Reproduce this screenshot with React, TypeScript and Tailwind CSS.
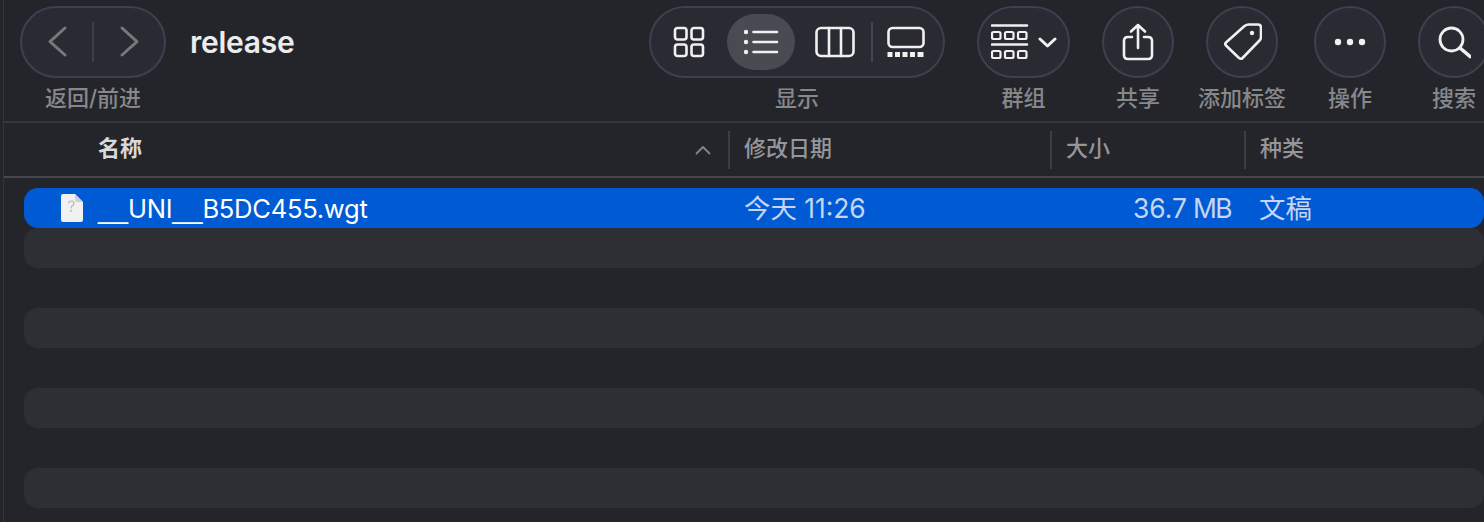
import React from "react";

const FONT = 'font-["Inter","Noto_Sans_CJK_SC",sans-serif]';

function ToolItem({ w, ml, label, children, className = "" }: { w: string; ml: string; label: string; children: React.ReactNode; className?: string }) {
  return (
    <div className={`flex flex-col items-center shrink-0 ${w} ${ml}`}>
      <div className={`h-[72px] w-full box-border rounded-[36px] border-2 border-[#3d404f] bg-[#292a32] flex items-center ${className}`}>
        {children}
      </div>
      <div className="mt-[5px] h-[30px] leading-[30px] whitespace-nowrap text-[22px] font-medium text-[#87888b]">{label}</div>
    </div>
  );
}

const stroke = { fill: "none", stroke: "#f0f0f1", strokeWidth: 2.6, strokeLinecap: "round", strokeLinejoin: "round" } as const;

export default function App() {
  return (
    <div className={`relative w-[1484px] h-[522px] overflow-hidden bg-[#24252a] ${FONT}`}>
      <div className="h-full ml-[3px] border-l border-[#34363f] flex flex-col">
        {/* toolbar */}
        <div className="h-[111px] pt-[6px] flex shrink-0 pl-[16px] box-content pb-[4px] border-b-2 border-[#36373b]">
          <ToolItem w="w-[146px]" ml="ml-0" label="返回/前进">
            <svg width="142" height="68" viewBox="22 8 142 68" className="shrink-0">
              <path d="M65 28 L50 41.7 L65 55" fill="none" stroke="#77787c" strokeWidth="3" strokeLinecap="round" strokeLinejoin="round" />
              <path d="M122 28 L137 41.7 L122 55" fill="none" stroke="#77787c" strokeWidth="3" strokeLinecap="round" strokeLinejoin="round" />
              <path d="M93 22 V62" stroke="#45464c" strokeWidth="1.5" />
            </svg>
          </ToolItem>
          <div className="ml-[24px] w-[459px] shrink-0 h-[72px] flex items-center text-[30px] font-semibold tracking-[-0.25px] text-[#ececed]">release</div>

          <div className="flex flex-col items-center shrink-0 w-[296px]">
            <div className="h-[72px] w-full box-border rounded-[36px] border-2 border-[#3d404f] bg-[#292a32] flex items-center">
              <div className="w-[76px] flex justify-center">
                <svg width="32" height="32" viewBox="0 0 32 32" {...stroke}>
                  <rect x="2" y="2" width="11.5" height="11.5" rx="2.5" />
                  <rect x="18.5" y="2" width="11.5" height="11.5" rx="2.5" />
                  <rect x="2" y="18.5" width="11.5" height="11.5" rx="2.5" />
                  <rect x="18.5" y="18.5" width="11.5" height="11.5" rx="2.5" />
                </svg>
              </div>
              <div className="w-[68px] h-[56px] rounded-[28px] bg-[#4a4b52] flex items-center justify-center">
                <svg width="36" height="28" viewBox="0 0 36 28">
                  <circle cx="3" cy="4" r="2.2" fill="#f0f0f1" />
                  <circle cx="3" cy="14" r="2.2" fill="#f0f0f1" />
                  <circle cx="3" cy="24" r="2.2" fill="#f0f0f1" />
                  <path d="M10.5 4 H34 M10.5 14 H34 M10.5 24 H34" {...stroke} />
                </svg>
              </div>
              <div className="w-[76px] flex justify-center pl-[4px]">
                <svg width="40" height="32" viewBox="0 0 40 32" {...stroke}>
                  <rect x="1.5" y="2" width="37" height="28" rx="4.5" />
                  <path d="M14 2 V30 M26 2 V30" />
                </svg>
              </div>
              <div className="w-[2px] h-[40px] bg-[#45464c]" />
              <div className="w-[69px] flex justify-center pr-[4px]">
                <svg width="38" height="32" viewBox="0 0 38 32">
                  <rect x="1.5" y="2" width="35" height="19" rx="4" {...stroke} />
                  <g fill="#f0f0f1">
                    <rect x="0.5" y="26" width="5" height="5" />
                    <rect x="8" y="26" width="5" height="5" />
                    <rect x="15.5" y="26" width="5" height="5" />
                    <rect x="23" y="26" width="5" height="5" />
                    <rect x="30.5" y="26" width="6" height="5" />
                  </g>
                </svg>
              </div>
            </div>
            <div className="mt-[5px] h-[30px] leading-[30px] text-[22px] font-medium text-[#87888b]">显示</div>
          </div>

          <ToolItem w="w-[93px]" ml="ml-[32px]" label="群组" className="pl-[12px]">
            <svg width="66" height="36" viewBox="0 0 66 36" className="shrink-0">
              <path d="M1 1.5 H36 M1 20.5 H36" {...stroke} />
              <g {...stroke} strokeWidth={2.2}>
                <rect x="1" y="8" width="8.5" height="7" rx="1.5" />
                <rect x="14" y="8" width="8.5" height="7" rx="1.5" />
                <rect x="27" y="8" width="8.5" height="7" rx="1.5" />
                <rect x="1" y="27" width="8.5" height="7" rx="1.5" />
                <rect x="14" y="27" width="8.5" height="7" rx="1.5" />
                <rect x="27" y="27" width="8.5" height="7" rx="1.5" />
              </g>
              <path d="M49 15 L56.5 22 L64 15" fill="none" stroke="#f0f0f1" strokeWidth="3" strokeLinecap="round" strokeLinejoin="round" />
            </svg>
          </ToolItem>

          <ToolItem w="w-[72px]" ml="ml-[32px]" label="共享" className="justify-center">
            <svg width="32" height="38" viewBox="0 0 32 38" {...stroke}>
              <path d="M10 14 H6 Q2 14 2 18 V32 Q2 36 6 36 H26 Q30 36 30 32 V18 Q30 14 26 14 H22" />
              <path d="M16 25 V2 M9 8.5 L16 2 L23 8.5" />
            </svg>
          </ToolItem>

          <ToolItem w="w-[72px]" ml="ml-[32px]" label="添加标签" className="justify-center">
            <svg width="40" height="40" viewBox="-1 0 40 40" {...stroke}>
              <path d="M26 2.5 H35 Q38 2.5 38 5.5 V15 Q38 17 36.5 18.5 L19.5 36 Q18 37.5 16 36 L3 23.5 Q1.5 22 3 20.5 L21.5 4 Q23.5 2.5 26 2.5 Z" />
              <circle cx="29" cy="11" r="2.2" fill="#f0f0f1" stroke="none" />
            </svg>
          </ToolItem>

          <ToolItem w="w-[72px]" ml="ml-[36px]" label="操作" className="justify-center">
            <svg width="32" height="8" viewBox="0 0 32 8">
              <circle cx="4" cy="4" r="3.2" fill="#f0f0f1" />
              <circle cx="16" cy="4" r="3.2" fill="#f0f0f1" />
              <circle cx="28" cy="4" r="3.2" fill="#f0f0f1" />
            </svg>
          </ToolItem>

          <ToolItem w="w-[72px]" ml="ml-[32px]" label="搜索" className="justify-center">
            <svg width="34" height="34" viewBox="0 0 34 34" fill="none" stroke="#f0f0f1" strokeLinecap="round">
              <circle cx="14.5" cy="14.5" r="11.5" strokeWidth="2.8" />
              <path d="M23 23 L33 31.5" strokeWidth="3.6" />
            </svg>
          </ToolItem>
        </div>

        {/* column header */}
        <div className="h-[55px] shrink-0 flex items-center border-b-2 border-[#47484c] text-[22px] font-medium text-[#95969a]">
          <div className="w-[724px] shrink-0 h-full flex items-center pl-[94px] pr-[17px] justify-between">
            <span className="font-bold text-[#d9d9da] pb-[3px]">名称</span>
            <svg width="16" height="10" viewBox="0 0 16 10" fill="none" stroke="#85868a" strokeWidth="1.8" strokeLinecap="round" strokeLinejoin="round">
              <path d="M1.5 8.5 L8 2 L14.5 8.5" />
            </svg>
          </div>
          <div className="w-[2px] h-[38px] bg-[#3c3d41] shrink-0" />
          <div className="w-[320px] shrink-0 pl-[14px] pb-[3px]">修改日期</div>
          <div className="w-[2px] h-[38px] bg-[#3c3d41] shrink-0" />
          <div className="w-[192px] shrink-0 pl-[14px] pb-[3px]">大小</div>
          <div className="w-[2px] h-[38px] bg-[#3c3d41] shrink-0" />
          <div className="pl-[14px] pb-[3px]">种类</div>
        </div>

        {/* rows */}
        <div className="pt-[10px] pl-[20px] flex flex-col">
          <div className="h-[40px] rounded-[14px] bg-[#005ad4] flex items-center text-[26.4px] shrink-0">
            <div className="w-[59px] shrink-0 flex justify-end">
              <svg width="22" height="28" viewBox="0 0 22 28">
                <path d="M2 0 H14 L22 8 V26 Q22 28 20 28 H2 Q0 28 0 26 V2 Q0 0 2 0 Z" fill="#f1f1f2" />
                <path d="M14 0 V6 Q14 8 16 8 H22 Z" fill="#cfd0d3" />
                <path d="M7.5 9.5 Q8 7 10.5 7 Q13 7 13 9.5 Q13 11 11 12 Q10 12.8 10 14.5" fill="none" stroke="#b4b5b8" strokeWidth="1.2" />
                <circle cx="10" cy="17" r="0.9" fill="#b4b5b8" />
              </svg>
            </div>
            <div className="w-[646px] shrink-0 pl-[15px] pt-[2px] text-white text-[25.6px] tracking-[-0.3px] whitespace-nowrap">
              <span className='font-["Liberation_Sans"] text-[27px] tracking-normal'>__</span>UNI<span className='font-["Liberation_Sans"] text-[27px] tracking-normal'>__</span>B5DC455.wgt
            </div>
            <div className="w-[322px] shrink-0 text-[#c5d5f2] pl-[15px] pt-[2px]">今天 11:26</div>
            <div className="w-[180px] shrink-0 flex justify-end text-[#c5d5f2] pt-[2px]">
              <span>36.7</span>
              <span className="ml-[6px] tracking-[-1.5px]">MB</span>
            </div>
            <div className="pl-[28px] pt-[2px] text-[#c5d5f2]">文稿</div>
          </div>
          <div className="h-[40px] rounded-[14px] bg-[#2e2f34] shrink-0" />
          <div className="h-[40px] shrink-0" />
          <div className="h-[40px] rounded-[14px] bg-[#2e2f34] shrink-0" />
          <div className="h-[40px] shrink-0" />
          <div className="h-[40px] rounded-[14px] bg-[#2e2f34] shrink-0" />
          <div className="h-[40px] shrink-0" />
          <div className="h-[40px] rounded-[14px] bg-[#2e2f34] shrink-0" />
        </div>
      </div>
    </div>
  );
}
